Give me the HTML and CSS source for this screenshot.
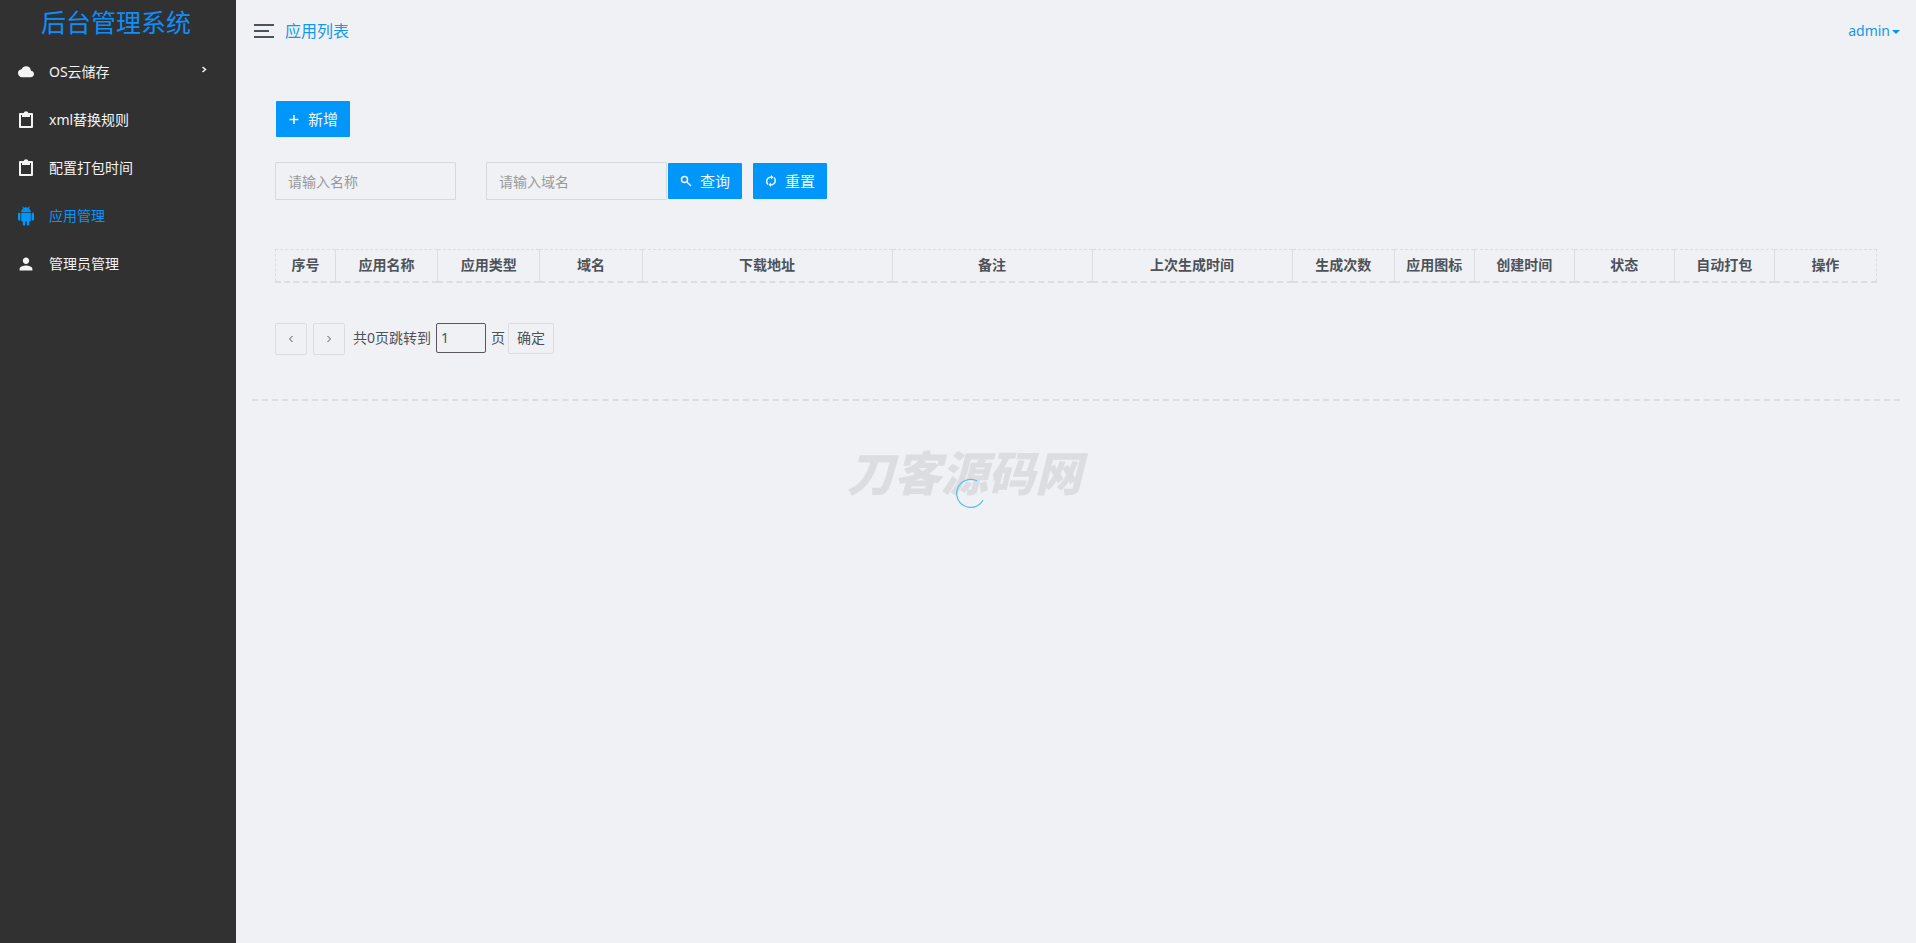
FILE: index.html
```html
<!DOCTYPE html>
<html lang="zh-CN">
<head>
<meta charset="utf-8">
<title>后台管理系统</title>
<link rel="stylesheet" href="styles.css">
</head>
<body>
<div class="app">
  <aside class="sidebar">
    <h1 class="brand">后台管理系统</h1>
    <nav class="menu">
      <a class="menu-item" href="#">
        <svg class="menu-icon" viewBox="0 0 24 24"><path d="M19.350 10.040A7.490 7.490 0 0 0 12 3.500C9.110 3.500 6.600 5.140 5.350 8.040A5.990 5.990 0 0 0 0 14c0 3.310 2.690 6 6 6h13c2.760 0 5-2.240 5-5 0-2.640-2.050-4.780-4.650-4.960z"/></svg>
        <span>OS云储存</span>
        <svg class="menu-arrow" viewBox="0 0 6 8"><path d="M1.500 1l3 2.500-3 2.500"/></svg>
      </a>
      <a class="menu-item" href="#">
        <svg class="menu-icon" viewBox="0 0 16 20"><path d="M2 3H5.600a2.500 2.500 0 0 1 4.800 0H14Q15 3 15 4V17Q15 18 14 18H2Q1 18 1 17V4Q1 3 2 3zM3 5V16H13V5H12V7H4V5z"/></svg>
        <span>xml替换规则</span>
      </a>
      <a class="menu-item" href="#">
        <svg class="menu-icon" viewBox="0 0 16 20"><path d="M2 3H5.600a2.500 2.500 0 0 1 4.800 0H14Q15 3 15 4V17Q15 18 14 18H2Q1 18 1 17V4Q1 3 2 3zM3 5V16H13V5H12V7H4V5z"/></svg>
        <span>配置打包时间</span>
      </a>
      <a class="menu-item active" href="#">
        <svg class="menu-icon" viewBox="2 0 20 24"><path d="M6 18c0 .55.45 1 1 1h1v3.500c0 .83.670 1.500 1.500 1.500s1.500-.67 1.500-1.500V19h2v3.500c0 .83.670 1.500 1.500 1.500s1.500-.67 1.500-1.500V19h1c.55 0 1-.45 1-1V8H6v10zM3.500 8C2.670 8 2 8.670 2 9.500v7c0 .83.670 1.500 1.500 1.500S5 17.330 5 16.500v-7C5 8.670 4.330 8 3.500 8zm17 0c-.83 0-1.500.67-1.500 1.500v7c0 .83.670 1.500 1.500 1.500s1.500-.67 1.500-1.500v-7c0-.83-.67-1.500-1.500-1.500zm-4.970-5.840l1.300-1.300c.2-.2.2-.51 0-.71-.2-.2-.51-.2-.71 0l-1.480 1.480A5.840 5.840 0 0 0 12 1c-.96 0-1.860.23-2.660.63L7.850.15c-.2-.2-.51-.2-.71 0-.2.2-.2.51 0 .71l1.310 1.310A5.983 5.983 0 0 0 6 7h12c0-1.990-.97-3.750-2.470-4.840zM10 5H9V4h1v1zm5 0h-1V4h1v1z"/></svg>
        <span>应用管理</span>
      </a>
      <a class="menu-item" href="#">
        <svg class="menu-icon" viewBox="2 2 20 20"><path d="M12 12c2.210 0 4-1.790 4-4s-1.790-4-4-4-4 1.790-4 4 1.790 4 4 4zm0 2c-2.670 0-8 1.340-8 4v2h16v-2c0-2.660-5.330-4-8-4z"/></svg>
        <span>管理员管理</span>
      </a>
    </nav>
  </aside>
  <div class="main">
    <header class="topbar">
      <button class="toggle" aria-label="菜单"><i class="bar"></i><i class="bar short"></i><i class="bar"></i></button>
      <span class="page-title">应用列表</span>
      <button class="user">admin<i class="caret"></i></button>
    </header>
    <main class="card">
      <button class="btn">
        <svg class="btn-icon" viewBox="0 0 12 12"><path d="M6 2v9M1.500 6.500h9"/></svg>新增
      </button>
      <form class="filters">
        <input class="field" type="text" placeholder="请输入名称" aria-label="名称">
        <input class="field second" type="text" placeholder="请输入域名" aria-label="域名">
        <button class="btn" type="button">
          <svg class="btn-icon" viewBox="0 0 12 12"><circle cx="4.500" cy="4.500" r="3"/><path d="M7 7l4 4"/></svg>查询
        </button>
        <button class="btn reset" type="button">
          <svg class="btn-icon" viewBox="0 0 12 12"><path d="M3 9.500A4.200 4.200 0 0 1 5 2.300H7M9 2.500A4.200 4.200 0 0 1 7 9.700H5"/><path class="solid" d="M6 0l2.500 2.300L6 4.600zM6 7.400L3.500 9.700 6 12z"/></svg>重置
        </button>
      </form>
      <table class="grid">
        <colgroup><col class="w60"><col><col><col><col class="w250"><col class="w200"><col class="w200"><col><col class="w80"><col class="w100"><col class="w100"><col class="w100"><col></colgroup>
        <thead>
          <tr><th>序号</th><th>应用名称</th><th>应用类型</th><th>域名</th><th>下载地址</th><th>备注</th><th>上次生成时间</th><th>生成次数</th><th>应用图标</th><th>创建时间</th><th>状态</th><th>自动打包</th><th>操作</th></tr>
        </thead>
      </table>
      <div class="pager">
        <button class="page-btn" aria-label="上一页"><svg class="chev" viewBox="0 0 6 8"><path d="M4.500 1l-3 3 3 3"/></svg></button>
        <button class="page-btn" aria-label="下一页"><svg class="chev" viewBox="0 0 6 8"><path d="M1.500 1l3 3-3 3"/></svg></button>
        <label class="jump" for="page">共0页跳转到</label>
        <input class="page-input" id="page" type="text" value="1">
        <span class="unit">页</span>
        <button class="ok">确定</button>
      </div>
    </main>
  </div>
</div>
<div class="watermark">刀客源码网</div>
<svg class="spinner" viewBox="0 0 30 30"><path d="M22 2.900A14 14 0 1 0 28 22"/></svg>
</body>
</html>
```

FILE: styles.css
```css
* { box-sizing: border-box; }
body {
  margin: 0;
  background: #f0f1f4;
  color: #4d5259;
  font: 14px/20px "Noto Sans", "Noto Sans CJK SC", sans-serif;
}
button, input { font: inherit; color: inherit; margin: 0; }
button { cursor: pointer; }
svg { display: block; }

.app { display: flex; min-height: 100vh; }
.sidebar { width: 236px; flex: none; background: #313131; }
.brand {
  margin: 0;
  padding-right: 4px;
  height: 48px;
  font-size: 25px;
  line-height: 45px;
  font-weight: 400;
  text-align: center;
  color: #0c8ffa;
}
.menu-item {
  display: flex;
  align-items: center;
  height: 48px;
  padding: 0 29px 0 18px;
  color: #f4f4f4;
  text-decoration: none;
}
.menu-icon { width: 16px; height: 20px; margin-right: 15px; fill: currentColor; }
.menu-arrow {
  width: 6px;
  height: 8px;
  margin: 0 0 4px auto;
  fill: none;
  stroke: currentColor;
  stroke-width: 1.5;
}
.active { color: #0096fa; }

.main { flex: 1; min-width: 0; padding: 0 16px; }
.topbar { display: flex; align-items: center; height: 62px; }
.toggle {
  display: flex;
  flex-direction: column;
  gap: 4px;
  width: 20px;
  margin: 0 11px 0 2px;
  padding: 0;
  border: 0;
  background: none;
}
.bar { width: 20px; height: 2px; background: #4d5259; }
.short { width: 15px; }
.page-title { font-size: 16px; color: #1299ec; }
.user {
  display: flex;
  align-items: center;
  gap: 2px;
  margin-left: auto;
  padding: 0;
  border: 0;
  background: none;
  font-size: 14px;
  color: #1299ec;
}
.caret { border: 4px solid transparent; border-top-color: #0096fa; border-bottom: 0; margin-top: 2px; }

.card {
  padding: 39px 23px 44px;
  border-bottom: 2px dashed #dcdde1;
}
.btn {
  display: flex;
  align-items: center;
  gap: 8px;
  height: 36px;
  margin-left: 1px;
  padding: 0 12px;
  border: 0;
  border-radius: 1px;
  background: #0096fa;
  color: #f3f7fb;
  font-size: 15px;
}
.btn-icon { width: 12px; height: 12px; fill: none; stroke: currentColor; stroke-width: 1.5; }
.solid { fill: currentColor; stroke: none; }
.filters { display: flex; align-items: center; margin-top: 25px; }
.field {
  width: 181px;
  height: 38px;
  padding: 0 12px;
  border: 1px solid #d6d8dc;
  border-radius: 1px;
  background: none;
  outline: 0;
}
.field::placeholder { color: #98999c; opacity: 1; }
.second { margin-left: 30px; }
.reset { margin-left: 11px; }

.grid {
  width: 100%;
  margin-top: 49px;
  table-layout: fixed;
  border-collapse: collapse;
  border: 1px dashed #dcdde1;
  border-bottom-width: 2px;
}
.grid th { height: 32px; padding: 0; border-left: 1px solid #dcdde1; font-weight: 700; }
.grid th:first-child { border-left: 0; }
.w60 { width: 60px; }
.w80 { width: 80px; }
.w100 { width: 100px; }
.w200 { width: 200px; }
.w250 { width: 250px; }

.pager { display: flex; align-items: flex-start; margin-top: 40px; line-height: 30px; }
.page-btn {
  display: grid;
  place-items: center;
  width: 32px;
  height: 32px;
  margin-right: 6px;
  padding: 0;
  border: 1px solid #dcdde1;
  border-radius: 2px;
  background: none;
}
.chev { width: 6px; height: 8px; fill: none; stroke: currentColor; }
.jump { margin: 0 5px 0 2px; }
.page-input {
  width: 50px;
  height: 30px;
  padding: 0 4px;
  border: 1px solid #5b5560;
  border-radius: 2px;
  background: none;
}
.unit { margin: 0 3px 0 5px; }
.ok {
  height: 31px;
  padding: 0 8px;
  border: 1px solid #dcdde1;
  border-radius: 2px;
  background: none;
  line-height: 28px;
}

.watermark {
  position: fixed;
  left: 50%;
  top: 50%;
  margin: -30px 0 0 -111px;
  font: italic 900 47px/58px "Noto Sans CJK SC", sans-serif;
  white-space: nowrap;
  color: #dcdde1;
}
.spinner {
  position: fixed;
  left: 50%;
  top: 50%;
  width: 30px;
  height: 30px;
  margin: 6px 0 0 -3px;
  fill: none;
  stroke: #5cbdf0;
  stroke-width: 1.3;
}
```
